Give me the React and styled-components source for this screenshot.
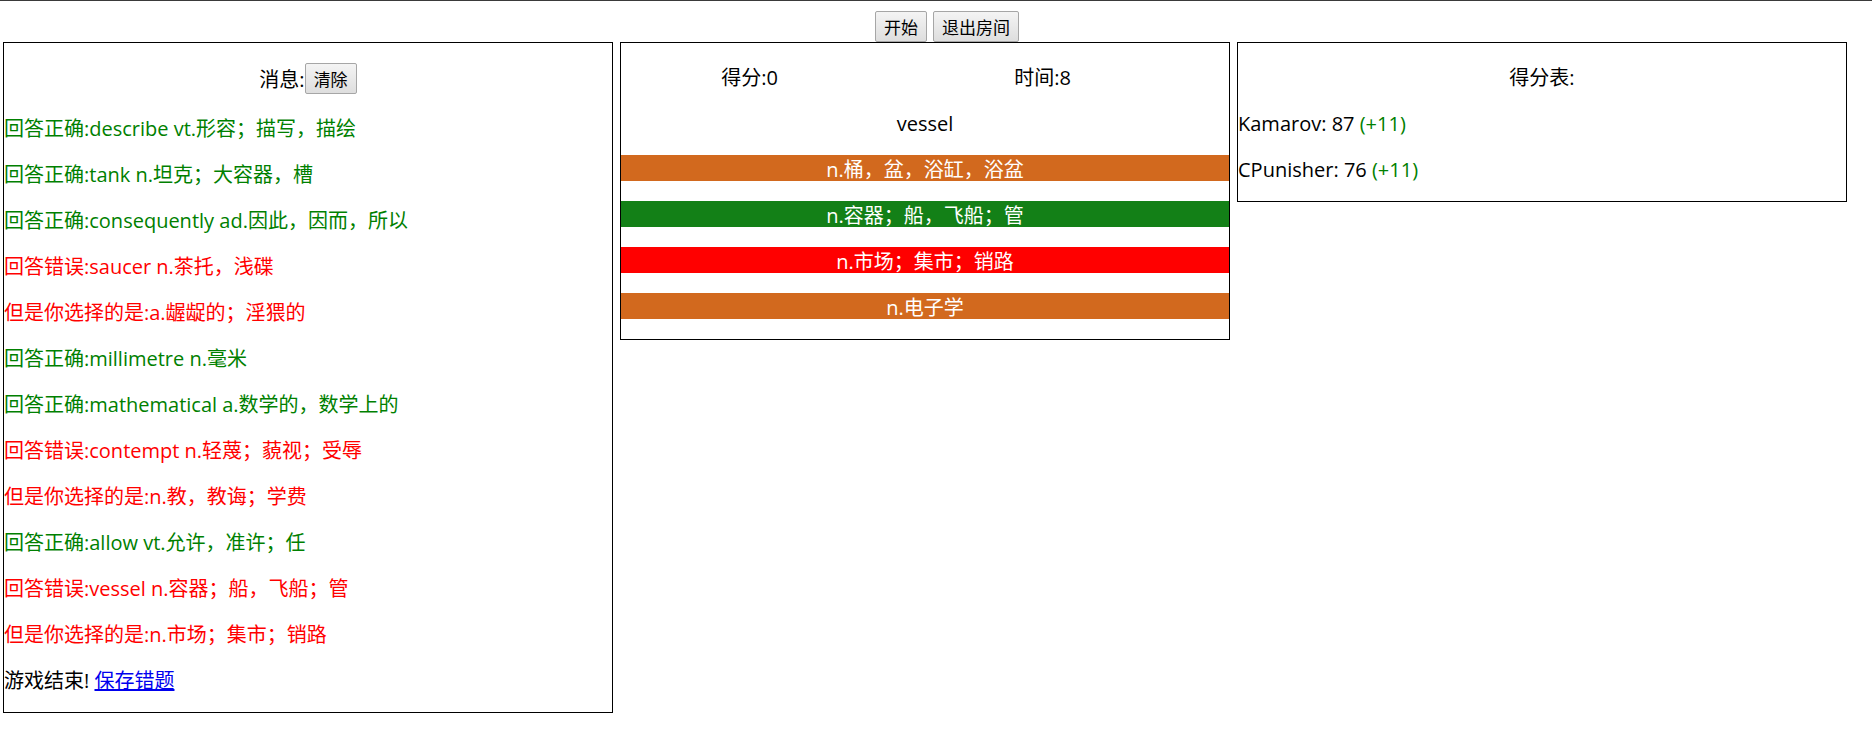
import React from 'react';
import styled, { createGlobalStyle, css } from 'styled-components';

const GlobalStyle = createGlobalStyle`
  body {
    margin: 0;
    background: #fff;
    font-family: "Open Sans", "Noto Sans CJK SC", sans-serif;
    font-size: 20px;
    color: #000;
  }
`;

const messages = [
  { ok: true, text: '回答正确:describe vt.形容；描写，描绘' },
  { ok: true, text: '回答正确:tank n.坦克；大容器，槽' },
  { ok: true, text: '回答正确:consequently ad.因此，因而，所以' },
  { ok: false, text: '回答错误:saucer n.茶托，浅碟' },
  { ok: false, text: '但是你选择的是:a.龌龊的；淫猥的' },
  { ok: true, text: '回答正确:millimetre n.毫米' },
  { ok: true, text: '回答正确:mathematical a.数学的，数学上的' },
  { ok: false, text: '回答错误:contempt n.轻蔑；藐视；受辱' },
  { ok: false, text: '但是你选择的是:n.教，教诲；学费' },
  { ok: true, text: '回答正确:allow vt.允许，准许；任' },
  { ok: false, text: '回答错误:vessel n.容器；船，飞船；管' },
  { ok: false, text: '但是你选择的是:n.市场；集市；销路' },
];

const options = [
  { text: 'n.桶，盆，浴缸，浴盆', bg: '#d2691e' },
  { text: 'n.容器；船，飞船；管', bg: '#138017' },
  { text: 'n.市场；集市；销路', bg: '#ff0000' },
  { text: 'n.电子学', bg: '#d2691e' },
];

const scores = [
  { name: 'Kamarov', score: 87, gain: 11 },
  { name: 'CPunisher', score: 76, gain: 11 },
];

function App() {
  return (
    <Page>
      <GlobalStyle />
      <Toolbar>
        <Button>开始</Button>
        <Button>退出房间</Button>
      </Toolbar>
      <Panels>
        <Panel>
          <Header>
            <HeaderLabel>消息:</HeaderLabel>
            <Button>清除</Button>
          </Header>
          {messages.map((m, i) => (
            <Line key={i} $color={m.ok ? '#008000' : '#ff0000'}>{m.text}</Line>
          ))}
          <Line>
            游戏结束! <SaveLink href="#">保存错题</SaveLink>
          </Line>
        </Panel>

        <Panel>
          <Stats>
            <span>得分:0</span>
            <span>时间:8</span>
          </Stats>
          <Word>vessel</Word>
          {options.map((o) => (
            <Option key={o.text} $bg={o.bg}>{o.text}</Option>
          ))}
        </Panel>

        <Panel>
          <Word>得分表:</Word>
          {scores.map((s) => (
            <Line key={s.name}>
              {s.name}: {s.score} <Gain>(+{s.gain})</Gain>
            </Line>
          ))}
        </Panel>
      </Panels>
    </Page>
  );
}

// 26px rows, with the glyphs sitting a little low like the original font
const row = css`
  margin: 20px 0;
  padding-top: 4px;
  line-height: 22px;
`;

const Page = styled.div`
  border-top: 1px solid #3a3a3a;
`;

const Toolbar = styled.div`
  display: flex;
  justify-content: center;
  gap: 6px;
  padding: 10px 0 0 22px;
`;

const Button = styled.button`
  height: 31px;
  padding: 0 8px;
  font-family: "Noto Sans CJK SC", sans-serif;
  font-size: 17px;
  line-height: 29px;
  color: #000;
  background: linear-gradient(#f4f4f4, #dedede);
  border: 1px solid #a6a6a6;
  border-radius: 2px;
`;

const Panels = styled.div`
  display: flex;
  align-items: flex-start;
  gap: 7px;
  padding-left: 3px;
`;

const Panel = styled.div`
  box-sizing: border-box;
  width: 610px;
  border: 1px solid #000;
`;

const Header = styled.div`
  display: flex;
  align-items: center;
  justify-content: center;
  height: 31px;
  margin: 20px 0;
`;

const HeaderLabel = styled.span`
  padding-top: 2px;
  line-height: 26px;
`;

const Line = styled.p`
  ${row}
  color: ${(p) => p.$color || '#000'};
`;

const SaveLink = styled.a`
  color: #0000ee;
  text-decoration: underline;
`;

const Gain = styled.span`
  color: #008000;
`;

const Stats = styled.div`
  ${row}
  display: grid;
  grid-template-columns: 257px 329px;
  text-align: center;
`;

const Word = styled.p`
  ${row}
  text-align: center;
`;

const Option = styled.p`
  ${row}
  text-align: center;
  color: #fff;
  background: ${(p) => p.$bg};
`;

export default App;
